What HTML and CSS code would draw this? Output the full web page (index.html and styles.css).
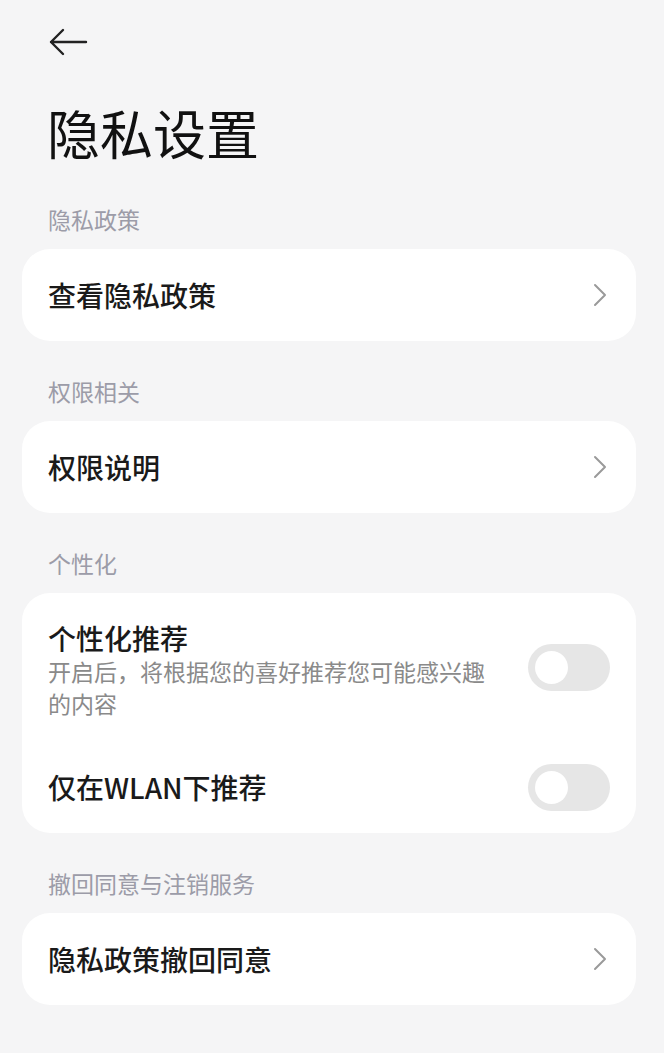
FILE: index.html
```html
<!DOCTYPE html>
<html lang="zh-CN">
<head>
<meta charset="utf-8">
<title>隐私设置</title>
<link rel="stylesheet" href="styles.css">
</head>
<body>
<div class="page">
  <svg class="back" width="40" height="32" viewBox="0 0 40 32" aria-label="返回">
    <path d="M38 16 H3 M15 4 L3 16 L15 28" fill="none" stroke="#222" stroke-width="2.4" stroke-linecap="round" stroke-linejoin="round"/>
  </svg>
  <h1 class="title">隐私设置</h1>

  <div class="label">隐私政策</div>
  <div class="card">
    <div class="row">
      <span class="item">查看隐私政策</span>
      <svg class="chev" width="14" height="24" viewBox="0 0 14 24"><path d="M2 2 L12 12 L2 22" fill="none" stroke="#9a9a9a" stroke-width="2" stroke-linecap="round" stroke-linejoin="round"/></svg>
    </div>
  </div>

  <div class="label">权限相关</div>
  <div class="card">
    <div class="row">
      <span class="item">权限说明</span>
      <svg class="chev" width="14" height="24" viewBox="0 0 14 24"><path d="M2 2 L12 12 L2 22" fill="none" stroke="#9a9a9a" stroke-width="2" stroke-linecap="round" stroke-linejoin="round"/></svg>
    </div>
  </div>

  <div class="label">个性化</div>
  <div class="card">
    <div class="row row-tall">
      <div class="text">
        <div class="item">个性化推荐</div>
        <div class="sub">开启后，将根据您的喜好推荐您可能感兴趣的内容</div>
      </div>
      <div class="toggle toggle-up"><span class="knob"></span></div>
    </div>
    <div class="row">
      <span class="item">仅在WLAN下推荐</span>
      <div class="toggle"><span class="knob"></span></div>
    </div>
  </div>

  <div class="label">撤回同意与注销服务</div>
  <div class="card">
    <div class="row">
      <span class="item">隐私政策撤回同意</span>
      <svg class="chev" width="14" height="24" viewBox="0 0 14 24"><path d="M2 2 L12 12 L2 22" fill="none" stroke="#9a9a9a" stroke-width="2" stroke-linecap="round" stroke-linejoin="round"/></svg>
    </div>
  </div>
</div>
</body>
</html>
```
FILE: styles.css
```css
html, body {
  margin: 0;
  padding: 0;
  background: #f5f5f6;
}
body {
  font-family: "Noto Sans CJK SC", "Noto Sans", sans-serif;
  color: #1a1a1a;
}
.page {
  padding: 0 28px 0 22px;
}
.back {
  display: block;
  margin: 26px 0 0 26px;
}
.title {
  margin: 42px 0 0 25px;
  font-size: 53px;
  line-height: 64px;
  font-weight: 400;
  color: #111;
}
.label {
  margin: 35px 0 15px 26px;
  font-size: 23px;
  line-height: 30px;
  color: #9c9ca8;
}
.title + .label {
  margin-top: 40px;
}
.card {
  background: #fff;
  border-radius: 28px;
}
.row {
  display: flex;
  align-items: center;
  justify-content: space-between;
  min-height: 92px;
  padding: 0 26px 0 26px;
  gap: 32px;
}
.row-tall {
  padding-top: 28px;
  padding-bottom: 22px;
}
.item {
  font-size: 28px;
  line-height: 34px;
  font-weight: 500;
  color: #1a1a1a;
}
.text {
  flex: 1;
  min-width: 0;
}
.sub {
  font-size: 23px;
  line-height: 32px;
  color: #8a8a8a;
}
.chev {
  display: block;
  margin-right: 3px;
}
.toggle {
  flex: none;
  width: 82px;
  height: 47px;
  border-radius: 24px;
  background: #e6e6e6;
  display: flex;
  align-items: center;
  padding-left: 7px;
  box-sizing: border-box;
}
.toggle-up {
  margin-bottom: 6px;
}
.knob {
  width: 33px;
  height: 33px;
  border-radius: 50%;
  background: #fff;
}
```
